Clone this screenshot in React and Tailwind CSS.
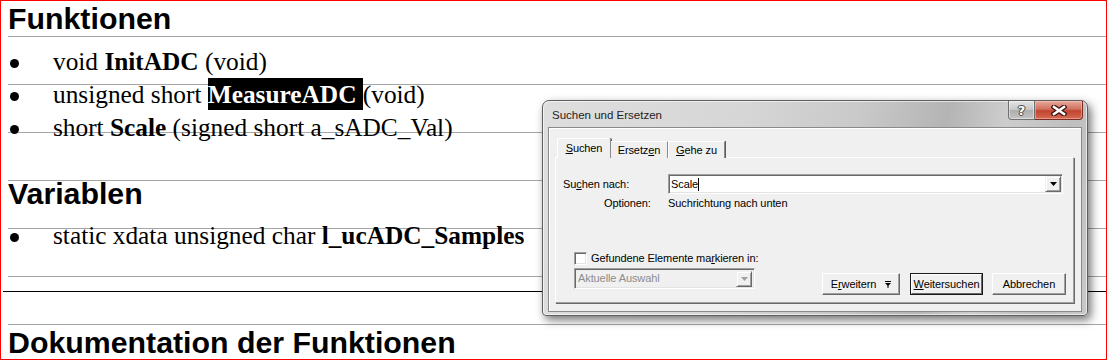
import React from "react";

function U({ children }) {
  return <span className="underline underline-offset-[1px]">{children}</span>;
}

function Bullet({ children }) {
  return (
    <li className="flex h-[33px] leading-[33px] text-[25.33px]">
      <span className="w-[45px] shrink-0 pl-[2px] pt-[14px]">
        <span className="block w-[9px] h-[9px] rounded-full bg-black" />
      </span>
      <span className="whitespace-nowrap">{children}</span>
    </li>
  );
}

function Heading({ children, className = "" }) {
  return (
    <div
      className={
        "pt-[1px] font-['Liberation_Sans',Arial,sans-serif] font-bold text-[30.3px] leading-[34px] whitespace-nowrap " +
        className
      }
    >
      {children}
    </div>
  );
}

function DownTri({ color = "#000" }) {
  return (
    <svg width="7" height="4" viewBox="0 0 7 4">
      <polygon points="0,0 7,0 3.5,4" fill={color} />
    </svg>
  );
}

function Dialog() {
  return (
    <div className="absolute left-[541px] top-[99px] w-[546px] h-[216px] flex flex-col rounded-t-[7px] rounded-b-[4px] border border-[#5f5f5f] bg-[linear-gradient(100deg,#dedede_0%,#d6d6d6_35%,#c9c9c9_55%,#b4b4b4_70%,#cdcdcd_80%,#bfbfbf_92%,#c8c8c8_100%)] shadow-[inset_0_0_0_1px_rgba(255,255,255,0.6),3px_4px_10px_rgba(0,0,0,0.55)] font-['Liberation_Sans',Arial,sans-serif] text-[11px] tracking-[-0.1px] text-black">
      {/* title bar */}
      <div className="h-[26px] flex items-start">
        <div className="pl-[9px] pt-[7px] text-[11.5px] leading-[14px] tracking-normal text-[#1e1e1e]">
          Suchen und Ersetzen
        </div>
        <div className="ml-auto mr-[4px] flex">
          <div className="w-[27px] h-[19px] flex items-center justify-center rounded-bl-[4px] border border-t-0 border-[#6f6f6f] bg-[linear-gradient(#e4e4e4,#c6c6c6_50%,#aeaeae_51%,#c4c4c4)] shadow-[inset_0_0_0_1px_rgba(255,255,255,0.45)]">
            <span className="font-['DejaVu_Sans',sans-serif] font-bold text-[13px] leading-none text-white [text-shadow:0_0_1px_#3a3a3a,0_0_1px_#3a3a3a,1px_0_0_#555,-1px_0_0_#555,0_1px_0_#555,0_-1px_0_#555]">
              ?
            </span>
          </div>
          <div className="w-[48px] h-[19px] flex items-center justify-center rounded-br-[4px] border border-t-0 border-l-0 border-[#7a2c22] bg-[linear-gradient(#e9a99c,#d0705f_45%,#c14430_55%,#d56b52)] shadow-[inset_0_0_0_1px_rgba(255,210,200,0.45)]">
            <svg width="16" height="11" viewBox="0 0 16 11">
              <path d="M3 2 L13 9 M13 2 L3 9" stroke="#3b1410" strokeWidth="5" strokeLinecap="square" />
              <path d="M3 2 L13 9 M13 2 L3 9" stroke="#ffffff" strokeWidth="2.6" strokeLinecap="square" />
            </svg>
          </div>
        </div>
      </div>

      {/* client area */}
      <div className="flex-1 mx-[5px] mb-[3px] border border-[#8a8a8a] bg-[#f0f0f0] shadow-[inset_1px_1px_0_#ffffff] flex flex-col pt-[10px] pl-[6px] pr-[7px] pb-[8px]">
        {/* tabs */}
        <div className="flex items-end pl-[2px] h-[20px] relative z-10 -mb-[1px]">
          <div className="w-[54px] h-[20px] flex items-center justify-center rounded-t-[2px] border-l border-t border-white border-r border-r-[#8a8a8a] bg-[#f0f0f0] shadow-[1px_0_0_#5a5a5a]">
            <span>
              <U>S</U>uchen
            </span>
          </div>
          <div className="w-[57px] h-[17px] flex items-center justify-center border-t border-t-white border-r border-r-[#8a8a8a] shadow-[1px_0_0_#5a5a5a] bg-[#f0f0f0]">
            <span>
              Ersetz<U>e</U>n
            </span>
          </div>
          <div className="w-[57px] h-[17px] flex items-center justify-center border-t border-t-white border-l border-l-white border-r border-r-[#8a8a8a] shadow-[1px_0_0_#5a5a5a] bg-[#f0f0f0]">
            <span>
              <U>G</U>ehe zu
            </span>
          </div>
        </div>

        {/* panel */}
        <div className="flex-1 flex flex-col border-t border-l border-t-white border-l-white border-r border-b border-r-[#a0a0a0] border-b-[#a0a0a0] shadow-[1px_1px_0_#696969] pt-[16px] px-[7px] pb-[7px]">
          <div className="flex items-center h-[20px]">
            <div className="w-[105px]">
              Su<U>c</U>hen nach:
            </div>
            <div className="flex-1 mr-[3px] h-[20px] flex items-center border border-t-[#a0a0a0] border-l-[#a0a0a0] border-b-white border-r-white shadow-[inset_1px_1px_0_#696969,inset_-1px_-1px_0_#e3e3e3] bg-white pl-[2px] pr-[1px]">
              <span className="border-r border-black leading-[13px]">Scale</span>
              <div className="ml-auto w-[16px] h-[16px] flex items-center justify-center bg-[#f0f0f0] border border-t-[#f0f0f0] border-l-[#f0f0f0] border-b-[#696969] border-r-[#696969] shadow-[inset_1px_1px_0_#ffffff,inset_-1px_-1px_0_#a0a0a0]">
                <DownTri />
              </div>
            </div>
          </div>
          <div className="flex items-center h-[16px] mt-[1px]">
            <div className="w-[41px]" />
            <div className="w-[64px]">Optionen:</div>
            <div>Suchrichtung nach unten</div>
          </div>

          <div className="flex-1" />

          <div className="flex items-end">
            <div className="flex flex-col ml-[11px] mb-[6px]">
              <div className="flex items-center h-[16px]">
                <div className="w-[13px] h-[13px] bg-white border border-t-[#a0a0a0] border-l-[#a0a0a0] border-b-white border-r-white shadow-[inset_1px_1px_0_#696969,inset_-1px_-1px_0_#e3e3e3]" />
                <span className="ml-[4px]">
                  Gefundene Elemente ma<U>r</U>kieren in:
                </span>
              </div>
              <div className="mt-[2px] w-[181px] h-[21px] flex items-center bg-[#f0f0f0] border border-t-[#a0a0a0] border-l-[#a0a0a0] border-b-white border-r-white shadow-[inset_1px_1px_0_#696969,inset_-1px_-1px_0_#e3e3e3] pl-[3px] pr-[2px] text-[#8d8d8d]">
                <span>Aktuelle Auswahl</span>
                <div className="ml-auto w-[16px] h-[16px] flex items-center justify-center bg-[#f0f0f0] border border-t-[#f0f0f0] border-l-[#f0f0f0] border-b-[#696969] border-r-[#696969] shadow-[inset_1px_1px_0_#ffffff,inset_-1px_-1px_0_#a0a0a0]">
                  <DownTri color="#a0a0a0" />
                </div>
              </div>
            </div>

            <div className="ml-auto flex items-end">
              <div className="w-[78px] h-[22px] flex items-center justify-center bg-[#f0f0f0] border border-t-white border-l-white border-b-[#696969] border-r-[#696969] shadow-[inset_-1px_-1px_0_#a0a0a0]">
                <span>
                  E<U>r</U>weitern
                </span>
                <svg className="ml-[9px]" width="6" height="7" viewBox="0 0 6 7">
                  <rect x="0" y="0" width="6" height="1" fill="#000" />
                  <polygon points="0,2 6,2 3,5" fill="#000" />
                  <rect x="2.5" y="4" width="1" height="3" fill="#000" />
                </svg>
              </div>
              <div className="ml-[10px] w-[73px] h-[22px] border border-[#1a1a1a]">
                <div className="w-full h-full flex items-center justify-center bg-[#f0f0f0] border border-t-white border-l-white border-b-[#696969] border-r-[#696969]">
                  <span>
                    <U>W</U>eitersuchen
                  </span>
                </div>
              </div>
              <div className="ml-[9px] w-[74px] h-[22px] flex items-center justify-center bg-[#f0f0f0] border border-t-white border-l-white border-b-[#696969] border-r-[#696969] shadow-[inset_-1px_-1px_0_#a0a0a0]">
                Abbrechen
              </div>
            </div>
          </div>
        </div>
      </div>
    </div>
  );
}

export default function App() {
  return (
    <div className="relative w-[1107px] h-[360px] overflow-hidden bg-white border border-[#ff0000] font-['Liberation_Serif','Times_New_Roman',serif] text-black">
      <div className="ml-[7px] h-full bg-[linear-gradient(#a6a6a6_1px,transparent_1px)] bg-[length:100%_48px] bg-[position:0_35px] bg-repeat">
        <Heading>Funktionen</Heading>
        <ul className="mt-[9px]">
          <Bullet>
            void <b>InitADC</b> (void)
          </Bullet>
          <Bullet>
            unsigned short{" "}
            <span className="bg-black text-white font-bold py-[2px]">MeasureADC </span>
            (void)
          </Bullet>
          <Bullet>
            short <b>Scale</b> (signed short a_sADC_Val)
          </Bullet>
        </ul>
        <Heading className="mt-[32px]">Variablen</Heading>
        <ul className="mt-[8px]">
          <Bullet>
            static xdata unsigned char <b>l_ucADC_Samples</b>
          </Bullet>
        </ul>
        <div className="mt-[39px] -ml-[5px] h-[1px] bg-black" />
        <Heading className="mt-[33px]">Dokumentation der Funktionen</Heading>
      </div>
      <Dialog />
    </div>
  );
}
